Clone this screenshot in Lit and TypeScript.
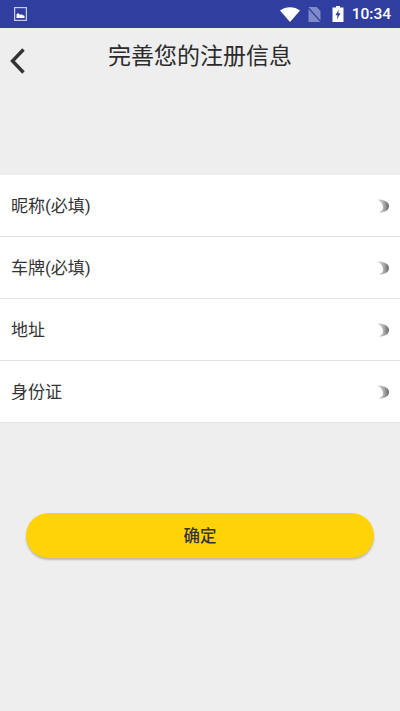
import { LitElement, html, css, svg } from "lit";
import { customElement } from "lit/decorators.js";

const ROWS = ["昵称(必填)", "车牌(必填)", "地址", "身份证"];

@customElement("app-root")
export class AppRoot extends LitElement {
  static styles = css`
    :host {
      display: flex;
      flex-direction: column;
      width: 400px;
      height: 711px;
      background: #eeeeee;
      font-family: "Roboto", "Noto Sans CJK SC", sans-serif;
      overflow: hidden;
    }
    .status {
      height: 28px;
      flex: none;
      background: #303f9f;
      display: flex;
      align-items: center;
      padding: 0 9px 0 14px;
      color: #fff;
    }
    .status .spacer { flex: 1; }
    .status svg { display: block; flex: none; }
    .wifi { margin-right: 8px; }
    .sim { margin-right: 11px; }
    .batt { margin-right: 8px; }
    .time { font-size: 15.5px; font-weight: 500; }
    .nav {
      height: 147px;
      flex: none;
      display: flex;
      align-items: flex-start;
      position: relative;
    }
    .back { margin: 20px 0 0 9px; flex: none; display: block; }
    .title {
      position: absolute;
      left: 0;
      right: 0;
      top: 15px;
      text-align: center;
      font-size: 23px;
      line-height: 28px;
      color: #2b2b2b;
    }
    .list { background: #fff; flex: none; }
    .row {
      height: 61px;
      border-bottom: 1px solid #e3e3e3;
      display: flex;
      align-items: center;
      justify-content: space-between;
      padding: 0 11px 0 11px;
      font-size: 17px;
      color: #333;
    }
    .row span { padding-bottom: 2px; }
    .moon { display: block; flex: none; }
    .footer {
      display: flex;
      justify-content: center;
      padding-top: 90px;
    }
    .btn {
      width: 348px;
      height: 45px;
      border-radius: 23px;
      background: #ffd307;
      box-shadow: 0 2px 2px rgba(120, 110, 70, 0.4);
      display: flex;
      align-items: center;
      justify-content: center;
      font-size: 16.5px;
      font-weight: 500;
      color: #333;
      padding-bottom: 2px;
      box-sizing: border-box;
    }
  `;

  private moon() {
    return html`<svg class="moon" width="12" height="14" viewBox="0 0 12 14">
      <defs>
        <linearGradient id="mg" x1="0" y1="0" x2="1" y2="0">
          <stop offset="0" stop-color="#e2e2e2" />
          <stop offset="0.55" stop-color="#b0b0b0" />
          <stop offset="1" stop-color="#666" />
        </linearGradient>
      </defs>
      <path d="M0 0.5 C6 0 12 2.5 12 7 C12 11.5 7 14 1.5 13.5 C5 12 6.5 10 6 7.5 C5.5 4.5 3 1.8 0 0.5 Z" fill="url(#mg)" />
    </svg>`;
  }

  render() {
    return html`
      <div class="status">
        <svg width="13" height="14" viewBox="0 0 13 14">
          <rect x="0.6" y="0.6" width="11.8" height="12.8" fill="none" stroke="#c5cae9" stroke-width="1.2" />
          <path d="M2.5 11 V7.5 L4 6 L5.5 7.5 H8 L10.5 9 V11 Z" fill="#fff" />
        </svg>
        <span class="spacer"></span>
        <svg class="wifi" width="20" height="15" viewBox="0 0 20 15">
          <path d="M0 3.5 C5.5 -1 14.5 -1 20 3.5 L10 15 Z" fill="#fff" />
        </svg>
        <svg class="sim" width="13" height="15" viewBox="0 0 13 15">
          <path d="M0.5 0 H8.5 L12.5 4 V15 H0.5 Z" fill="#7f8ac8" />
          <path d="M0 0.5 L13 15" stroke="#303f9f" stroke-width="1.2" />
        </svg>
        <svg class="batt" width="12" height="16" viewBox="0 0 12 16">
          <path fill-rule="evenodd" d="M4 0 H8 V1.5 H11.5 V16 H0.5 V1.5 H4 Z M6.8 3.5 L3.4 9.2 H5.6 L4.8 13.5 L8.6 7.2 H6.3 Z" fill="#fff" />
        </svg>
        <span class="time">10:34</span>
      </div>
      <div class="nav">
        <svg class="back" width="16" height="27" viewBox="0 0 16 27">
          ${svg`<path d="M14.5 1.5 L3.5 13 L14.5 24.5" fill="none" stroke="#333" stroke-width="3.4" />`}
        </svg>
        <div class="title">完善您的注册信息</div>
      </div>
      <div class="list">
        ${ROWS.map((r) => html`<div class="row"><span>${r}</span>${this.moon()}</div>`)}
      </div>
      <div class="footer"><div class="btn">确定</div></div>
    `;
  }
}
